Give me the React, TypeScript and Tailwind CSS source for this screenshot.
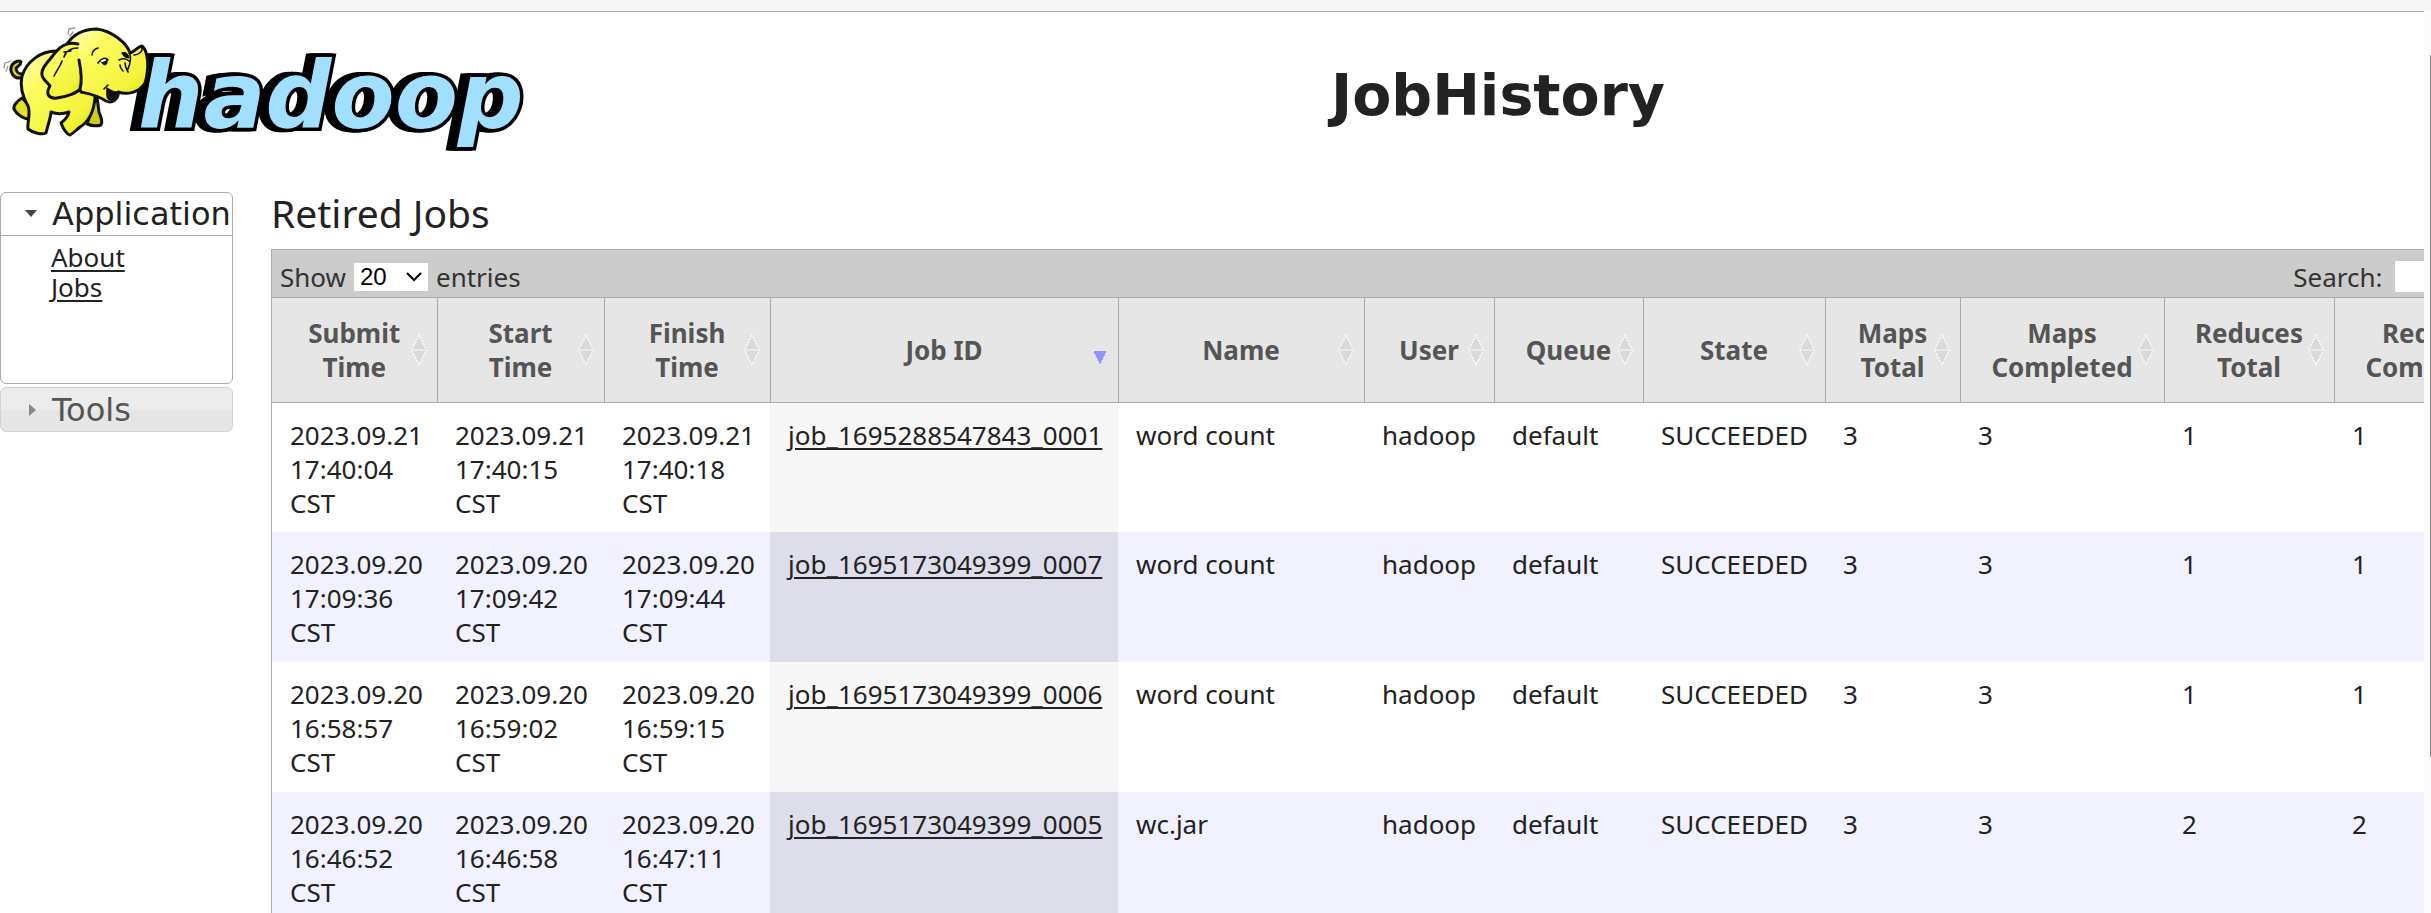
const cols = [
  { label: 'Submit Time', w: 'w-[165px]' },
  { label: 'Start Time', w: 'w-[167px]' },
  { label: 'Finish Time', w: 'w-[166px]' },
  { label: 'Job ID', w: 'w-[348px]', sorted: true },
  { label: 'Name', w: 'w-[246px]' },
  { label: 'User', w: 'w-[130px]' },
  { label: 'Queue', w: 'w-[149px]' },
  { label: 'State', w: 'w-[182px]' },
  { label: 'Maps Total', w: 'w-[135px]' },
  { label: 'Maps Completed', w: 'w-[204px]' },
  { label: 'Reduces Total', w: 'w-[170px]' },
  { label: 'Reduces Completed', w: 'w-[204px]' },
];

const rows = [
  ['2023.09.21 17:40:04 CST', '2023.09.21 17:40:15 CST', '2023.09.21 17:40:18 CST', 'job_1695288547843_0001', 'word count', 'hadoop', 'default', 'SUCCEEDED', '3', '3', '1', '1'],
  ['2023.09.20 17:09:36 CST', '2023.09.20 17:09:42 CST', '2023.09.20 17:09:44 CST', 'job_1695173049399_0007', 'word count', 'hadoop', 'default', 'SUCCEEDED', '3', '3', '1', '1'],
  ['2023.09.20 16:58:57 CST', '2023.09.20 16:59:02 CST', '2023.09.20 16:59:15 CST', 'job_1695173049399_0006', 'word count', 'hadoop', 'default', 'SUCCEEDED', '3', '3', '1', '1'],
  ['2023.09.20 16:46:52 CST', '2023.09.20 16:46:58 CST', '2023.09.20 16:47:11 CST', 'job_1695173049399_0005', 'wc.jar', 'hadoop', 'default', 'SUCCEEDED', '3', '3', '2', '2'],
];

function Elephant() {
  return (
    <>
      <defs>
        <linearGradient id="skin" x1="0" y1="0" x2="1" y2="1">
          <stop offset="0" stopColor="#ffffc8" />
          <stop offset="0.3" stopColor="#fcfc62" />
          <stop offset="0.75" stopColor="#f4f43a" />
          <stop offset="1" stopColor="#dede1c" />
        </linearGradient>
      </defs>
      <g stroke="#111" strokeWidth="3" strokeLinejoin="round" strokeLinecap="round">
        <path d="M21 78C13 79 9 71 12 65C15 61 20 60 21 62C21 65 18 66 16 68C16 72 19 74 22 74" fill="#d8d820" />
        <path d="M22 98C17 101 13 106 14 109C17 115 24 119 29 119L32 108Z" fill="#e0e024" />
        <path d="M96 97L87 124C92 126 98 126 101 125C103 122 101 117 99 112L97 97Z" fill="#cccc18" />
        <path d="M56 51C41 51 27 61 22 76C20 85 21 94 28 106C31 113 27 123 28 129C33 133 42 135 46 133C48 124 51 117 51 112C56 114 63 114 69 112C68 117 65 120 61 123C63 128 66 134 70 135C74 133 76 130 80 127C88 122 94 112 95 97L90 60Z" fill="url(#skin)" />
        <path d="M67 44C75 32 88 29 97 29C112 31 127 43 130 53C135 52 138 46 142 46C149 52 149 70 145 83C139 93 127 95 118 92C119 99 112 104 106 101C97 95 90 94 81 92L68 62Z" fill="url(#skin)" />
        <path d="M78 44C66 41 59 47 51 58C45 65 41 70 42 75C43 80 48 83 50 86C45 94 49 99 57 98C66 97 77 93 80 89C82 82 81 70 79 60" fill="url(#skin)" />
        <path d="M107 88C107 96 106 99 111 100C115 98 118 96 117 92C114 92 110 90 107 88Z" fill="#111" strokeWidth="1.500" />
        <path d="M130 54C131 58 130 64 128 69M134 55C139 55 143 51 142 47M92 55C92 51 95 49 98 48M98 63C101 58 106 57 108 60M119 60C123 58 127 59 129 61M120 65C120 68 122 70 123 71M125 63C125 67 127 70 128 72M64 57C66 50 71 48 78 48M64 52L71 51M54 76C57 70 60 67 62 61M104 89L108 85" fill="none" strokeWidth="1.600" />
        <path d="M101 61C103 57 108 58 107 62C107 66 103 66 101 61ZM122 53C125 51 129 54 129 58C125 58 123 56 122 53Z" fill="#111" strokeWidth="1" />
        <path d="M102 61L105 60" stroke="#fff" strokeWidth="2" />
        <path d="M68 34L69 29L75 28M70 36L73 32M4 68L5 63L11 61M6 71L8 66" fill="none" stroke="#999" strokeWidth="1.300" />
      </g>
    </>
  );
}

function Logo() {
  return (
    <svg className="block h-[160px] w-[540px] shrink-0" viewBox="0 12 540 160" role="img" aria-label="hadoop">
      <text
        x="138"
        y="128"
        className="font-['DejaVu_Sans'] text-[92px] font-bold italic [filter:drop-shadow(-3px_0_0_#000)_drop-shadow(-4px_0_0_#000)] [paint-order:stroke]"
        fill="#a0dfff"
        stroke="#000"
        strokeWidth="7"
      >
        hadoop
      </text>
      <Elephant />
    </svg>
  );
}

function SortIcon({ sorted }: { sorted?: boolean }) {
  if (sorted) {
    return (
      <svg className="h-8 w-4 shrink-0" viewBox="0 0 16 32" aria-hidden="true">
        <path d="M1 17H15L8 31Z" fill="#9194ff" stroke="#f4f4ff" strokeWidth="1" strokeDasharray="2 2" />
        <path d="M2 17H14L8 29Z" fill="#9194ff" />
      </svg>
    );
  }
  return (
    <svg className="h-8 w-4 shrink-0" viewBox="0 0 16 32" aria-hidden="true">
      <path d="M8 3L14 15H2ZM2 17H14L8 29Z" fill="#dadada" />
      <path d="M8 1L0.500 16L8 31L15.500 16Z" fill="none" stroke="#fcfcfc" strokeWidth="1.300" strokeDasharray="2 1.500" />
      <path d="M1 16H15" stroke="#eee" strokeWidth="1" />
    </svg>
  );
}

function Sidebar() {
  return (
    <nav className="w-[233px] shrink-0 font-['DejaVu_Sans',sans-serif]">
      <section className="h-48 overflow-hidden rounded-md border border-[#aaa]">
        <h3 className="border-b border-[#aaa]">
          <button type="button" className="flex h-[42px] w-full items-center gap-[15px] pl-6 text-[32px] text-[#212121]">
            <svg className="h-4 w-3 shrink-0" viewBox="0 0 12 16" aria-hidden="true">
              <path d="M0 4H12L6 11Z" fill="#454545" />
            </svg>
            Application
          </button>
        </h3>
        <ul className="pt-[6px] pl-[50px] font-['Noto_Sans',sans-serif] text-[26px] leading-[30px] text-[#222]">
          <li><a href="#about" className="underline decoration-2 underline-offset-3">About</a></li>
          <li><a href="#jobs" className="underline decoration-2 underline-offset-3">Jobs</a></li>
        </ul>
      </section>
      <h3 className="mt-[3px]">
        <button type="button" className="flex h-[45px] w-full items-center gap-[15px] rounded-md border border-[#d3d3d3] bg-linear-to-b from-[#ececec] from-50% to-[#e6e6e6] to-50% pl-6 text-[32px] text-[#555]">
          <svg className="h-4 w-3 shrink-0" viewBox="0 0 12 16" aria-hidden="true">
            <path d="M4 2V14L11 8Z" fill="#888" />
          </svg>
          Tools
        </button>
      </h3>
    </nav>
  );
}

function JobsTable() {
  return (
    <div className="w-max border border-[#aaa]">
      <div className="flex h-12 items-center border-b border-[#aaa] bg-[#ccc] px-2 pt-[6px] text-[#333]">
        <label htmlFor="length" className="mr-2">Show</label>
        <div className="relative flex items-center">
          <select id="length" defaultValue="20" className="h-7 w-[74px] appearance-none bg-white pl-[6px] font-['Liberation_Sans',sans-serif] text-[24px] leading-7 text-black">
            <option>20</option>
            <option>40</option>
            <option>60</option>
          </select>
          <svg className="pointer-events-none absolute right-1 h-4 w-5" viewBox="0 0 20 16" aria-hidden="true">
            <path d="M3 4L10 11L17 4" fill="none" stroke="#000" strokeWidth="2" />
          </svg>
        </div>
        <span className="ml-2">entries</span>
        <label htmlFor="search" className="ml-auto">Search:</label>
        <input id="search" type="text" className="ml-3 h-[31px] w-[136px] bg-white px-2" />
      </div>
      <table className="table-fixed border-collapse">
        <colgroup>
          {cols.map((c) => <col key={c.label} className={c.w} />)}
        </colgroup>
        <thead>
          <tr className="h-[104px] bg-[#e6e6e6] text-[#555]">
            {cols.map((c) => (
              <th key={c.label} className="border-r border-b border-[#aaa] pr-[10px] pl-[26px] font-bold">
                <div className="flex items-center">
                  <span className="flex-1">{c.label}</span>
                  <SortIcon sorted={c.sorted} />
                </div>
              </th>
            ))}
          </tr>
        </thead>
        <tbody>
          {rows.map((r, i) => (
            <tr key={r[3]} className={i % 2 ? 'h-[130px] bg-[#f1f1ff]' : 'h-[130px] bg-white'}>
              {r.map((v, j) => (
                <td key={j} className={j === 3 ? (i % 2 ? 'bg-[#dedeea] pt-[15px] pl-[18px] align-top' : 'bg-[#f7f7f7] pt-[15px] pl-[18px] align-top') : 'pt-[15px] pr-1 pl-[18px] align-top'}>
                  {j === 3 ? <a href={'#' + v} className="underline decoration-2 underline-offset-3">{v}</a> : v}
                </td>
              ))}
            </tr>
          ))}
        </tbody>
      </table>
    </div>
  );
}

export default function App() {
  return (
    <div className="flex h-screen flex-col overflow-hidden bg-white font-['Noto_Sans',sans-serif] text-[26px] leading-[34px] text-[#222]">
      <div className="h-[11px] shrink-0 bg-[#f7f7f7]" />
      <div className="flex min-h-0 flex-1">
        <div className="min-w-0 flex-1 overflow-hidden border-t border-[#aaa]">
          <header className="flex h-[160px] items-center">
            <Logo />
            <h1 className="flex-1 pt-[6px] pl-8 text-center font-['DejaVu_Sans',sans-serif] text-[57px] leading-[64px] font-bold">JobHistory</h1>
          </header>
          <div className="flex pt-5">
            <Sidebar />
            <main className="min-w-0 flex-1 pl-[38px]">
              <h2 className="mb-[15px] text-[39px] leading-[42px]">Retired Jobs</h2>
              <JobsTable />
            </main>
          </div>
        </div>
        <div className="w-[7px] shrink-0 bg-[#fcfcfc] pt-11">
          <div className="ml-auto h-[702px] w-px bg-[#888]" />
        </div>
      </div>
    </div>
  );
}
